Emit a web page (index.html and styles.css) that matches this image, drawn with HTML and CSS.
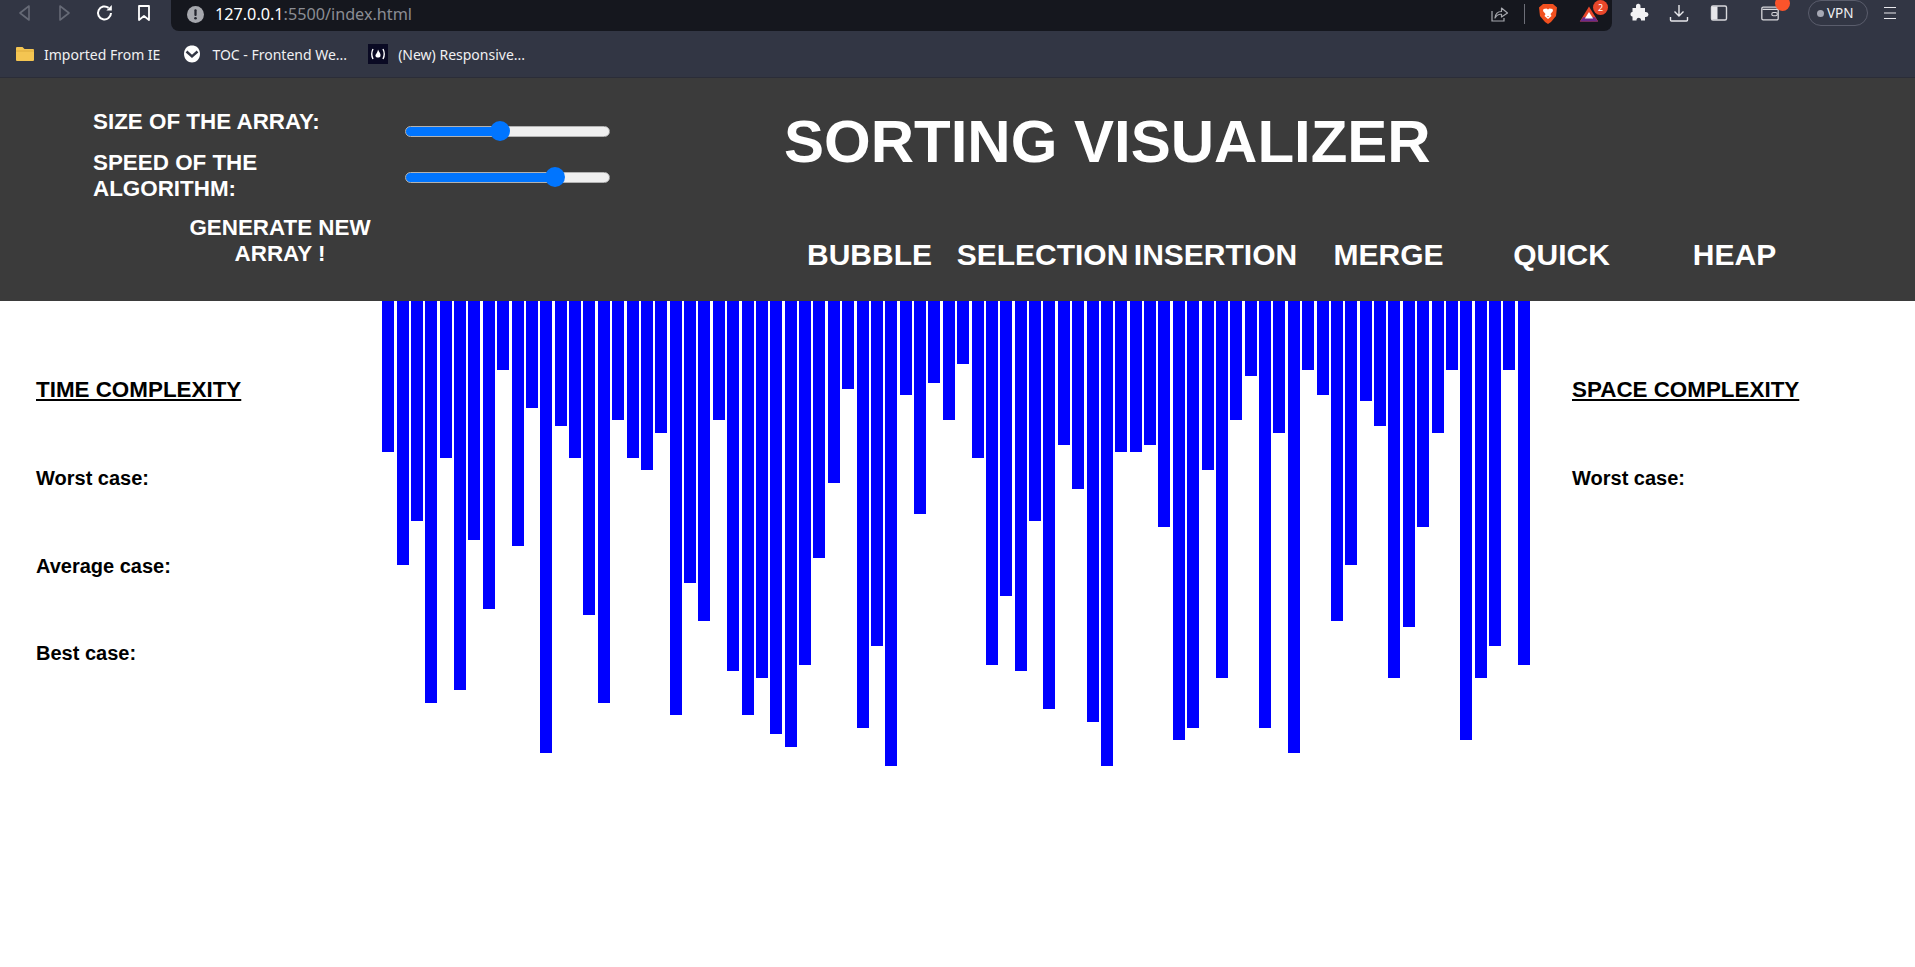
FILE: index.html
```html
<!DOCTYPE html>
<html lang="en">
<head>
    <meta charset="UTF-8">
    <meta name="viewport" content="width=device-width, initial-scale=1.0">
    <title>Sorting Visualizer</title>
    <link rel="stylesheet" href="styles.css">
</head>
<body>

    <div class="browser">
        <div class="toolbar">
            <div class="nav-icons">
                <svg class="icon" viewBox="0 0 20 20"><path d="M15 3 L6 10 L15 17 Z" fill="none" stroke="#666a76" stroke-width="1.6" stroke-linejoin="round"/></svg>
                <svg class="icon" viewBox="0 0 20 20"><path d="M6 3 L15 10 L6 17 Z" fill="none" stroke="#666a76" stroke-width="1.6" stroke-linejoin="round"/></svg>
                <svg class="icon" viewBox="0 0 20 20"><path d="M17 10 A6.5 6.5 0 1 1 14.6 4.9" fill="none" stroke="#fff" stroke-width="2"/><path d="M17.8 2 V7.4 H12.4 Z" fill="#fff"/></svg>
                <svg class="icon" viewBox="0 0 20 20"><path d="M5 3 H15 V17 L10 13 L5 17 Z" fill="none" stroke="#fff" stroke-width="1.8" stroke-linejoin="round"/></svg>
            </div>
            <div class="url-bar">
                <svg class="info-icon" viewBox="0 0 18 18"><circle cx="9" cy="9" r="9" fill="#a6a8ae"/><rect x="7.8" y="3.5" width="2.4" height="7" rx="1" fill="#23252e"/><circle cx="9" cy="13" r="1.4" fill="#23252e"/></svg>
                <span class="url"><span class="url-host">127.0.0.1</span>:5500/index.html</span>
                <div class="url-actions">
                    <svg class="icon share" viewBox="0 0 20 20"><path d="M3 7 V17 H15 V14" fill="none" stroke="#a6a8ae" stroke-width="1.2"/><path d="M6 14 C6.5 9.5 9.5 7.5 12.5 7.5 V4 L18.5 9 L12.5 13 V10.3 C10 10 7.5 11.5 6 14 Z" fill="none" stroke="#a6a8ae" stroke-width="1.2" stroke-linejoin="round"/></svg>
                    <span class="divider"></span>
                    <svg class="lion" viewBox="0 0 20 22"><path d="M5 1 H15 L19 4.5 L18 13 L13 19 L10 21 L7 19 L2 13 L1 4.5 Z" fill="#f1501f"/><path d="M5.5 6 L8.5 5.5 L10 6.5 L11.5 5.5 L14.5 6 L15 8 L12.5 11 L13.5 13 L10 16 L6.5 13 L7.5 11 L5 8 Z" fill="#fff"/><path d="M9 13 H11 L10 14.2 Z" fill="#f1501f"/></svg>
                    <div class="bat">
                        <svg class="icon" viewBox="0 0 24 20"><path d="M12 1 L23 19 H1 Z" fill="#e8472b"/><path d="M1 19 L5 14 H19 L23 19 Z" fill="#6b2a8c"/><path d="M12 7.5 L17 15.5 H7 Z" fill="#fff"/></svg>
                        <span class="badge">2</span>
                    </div>
                </div>
            </div>
            <div class="tool-icons">
                <svg class="icon" viewBox="0 0 20 20"><path d="M7 2.5 A2.3 2.3 0 0 1 11.5 3.5 V5 H16 V9 H17 A2.4 2.4 0 0 1 17 14 H16 V17.5 H12 V16.5 A2.3 2.3 0 0 0 7.5 16.5 V17.5 H3.5 V13.5 H3 A2.4 2.4 0 0 1 3 9 H3.5 V5 H7 Z" fill="#f2f2f4"/></svg>
                <svg class="icon" viewBox="0 0 20 20"><path d="M10 2 V13 M5.5 8.5 L10 13 L14.5 8.5" fill="none" stroke="#e8e8ec" stroke-width="1.4"/><path d="M1.5 14 V17 A1 1 0 0 0 2.5 18 H17.5 A1 1 0 0 0 18.5 17 V14" fill="none" stroke="#e8e8ec" stroke-width="1.4"/></svg>
                <svg class="icon" viewBox="0 0 20 20"><rect x="2.5" y="3" width="15" height="14" rx="1.5" fill="none" stroke="#d8d8dc" stroke-width="1.4"/><rect x="3" y="3.5" width="5.5" height="13" fill="#e6e6ea"/></svg>
                <div class="wallet">
                    <svg class="icon" viewBox="0 0 22 20"><path d="M19 6 V3.5 H3.5 A1.5 1.5 0 0 0 2 5 V16 A1.5 1.5 0 0 0 3.5 17.5 H19 A1.5 1.5 0 0 0 20 16 V6 H3" fill="none" stroke="#d8d8dc" stroke-width="1.4"/><rect x="13" y="9.5" width="6" height="3.5" rx="1.7" fill="none" stroke="#d8d8dc" stroke-width="1.2"/></svg>
                    <span class="wallet-dot"></span>
                </div>
                <div class="vpn"><span class="vpn-dot"></span>VPN</div>
                <svg class="menu" viewBox="0 0 12 14"><path d="M0 1.5 H12 M0 7 H12 M0 12.5 H12" stroke="#e8e8ec" stroke-width="1.2"/></svg>
            </div>
        </div>
        <div class="bookmarks">
            <div class="bookmark">
                <svg class="bm-icon" viewBox="0 0 20 16"><path d="M1 2 A1 1 0 0 1 2 1 H7.5 L9.5 3 H18 A1 1 0 0 1 19 4 V14 A1 1 0 0 1 18 15 H2 A1 1 0 0 1 1 14 Z" fill="#f4c552"/><path d="M1 5 H19" stroke="#d8a537" stroke-width="0.8"/></svg>
                Imported From IE
            </div>
            <div class="bookmark toc">
                <svg class="bm-icon small" viewBox="0 0 18 18"><path d="M9 0.5 C13 0.5 17 3 17 9 C17 14 13 17.5 9 17.5 C5 17.5 1 14 1 9 C1 3 5 0.5 9 0.5 Z" fill="#fff"/><path d="M3.5 6.5 L9 11.5 L14.5 6.5" fill="none" stroke="#323644" stroke-width="2.4"/></svg>
                TOC - Frontend We...
            </div>
            <div class="bookmark fcc">
                <svg class="bm-icon" viewBox="0 0 20 20"><rect width="20" height="20" fill="#0a0a23"/><path d="M5 5 Q2.5 10 5 15 M15 5 Q17.5 10 15 15" fill="none" stroke="#fff" stroke-width="1.4"/><path d="M10 5.5 C11 8 13 9.5 12.5 12 C12 14 8 14 7.5 12 C7.2 10.5 9.5 9 10 5.5 Z" fill="#fff"/></svg>
                (New) Responsive...
            </div>
        </div>
    </div>

    <header class="header">
        <div class="labels">
            <div class="label">SIZE OF THE ARRAY:</div>
            <div class="label">SPEED OF THE ALGORITHM:</div>
            <div class="generate">GENERATE NEW ARRAY !</div>
        </div>
        <div class="sliders">
            <input class="slider" type="range" min="0" max="100" value="46">
            <input class="slider" type="range" min="0" max="100" value="76">
        </div>
        <div class="title-block">
            <h1 class="title">SORTING VISUALIZER</h1>
            <nav class="algos">
                <div class="algo">BUBBLE</div>
                <div class="algo">SELECTION</div>
                <div class="algo">INSERTION</div>
                <div class="algo">MERGE</div>
                <div class="algo">QUICK</div>
                <div class="algo">HEAP</div>
            </nav>
        </div>
    </header>

    <main class="main">
        <section class="side side-left">
            <h2 class="side-title">TIME COMPLEXITY</h2>
            <p class="side-row">Worst case:</p>
            <p class="side-row">Average case:</p>
            <p class="side-row">Best case:</p>
        </section>
        <div class="bars" id="bars"></div>
        <section class="side side-right">
            <h2 class="side-title">SPACE COMPLEXITY</h2>
            <p class="side-row">Worst case:</p>
        </section>
    </main>

    <script src="script.js"></script>
</body>
</html>
```

FILE: styles.css
```css
* {
    box-sizing: border-box;
}
body {
    margin: 0;
    font-family: "Liberation Sans", Arial, sans-serif;
    background-color: #fff;
    color: #000;
    overflow: hidden;
}

/* browser chrome */
.browser {
    height: 78px;
    background-color: #323644;
    border-bottom: 1px solid #2b2d38;
    font-family: "Noto Sans", sans-serif;
    color: #f0f0f2;
}
.toolbar {
    display: flex;
    height: 31px;
}
.icon {
    width: 20px;
    height: 20px;
    display: block;
}
.nav-icons {
    display: flex;
    align-items: center;
    width: 171px;
    padding: 0 0 6px 14px;
    gap: 20px;
}
.url-bar {
    display: flex;
    align-items: center;
    width: 1441px;
    background-color: #15171e;
    border-radius: 0 0 8px 8px;
    padding: 0 0 3px 16px;
}
.info-icon {
    width: 17px;
    height: 17px;
}
.url {
    margin-left: 11px;
    font-size: 16.2px;
    color: #8b8d94;
    white-space: nowrap;
}
.url-host {
    color: #fff;
}
.url-actions {
    display: flex;
    align-items: center;
    margin-left: auto;
    padding-right: 11px;
}
.share {
    margin-right: 15px;
}
.divider {
    width: 1px;
    height: 20px;
    background-color: #6d6f78;
    margin-right: 13px;
}
.lion {
    width: 20px;
    height: 22px;
    margin-right: 21px;
}
.bat {
    position: relative;
    width: 22px;
    height: 20px;
}
.badge {
    position: absolute;
    top: -4px;
    right: -7px;
    width: 15px;
    height: 15px;
    border-radius: 50%;
    background-color: #e8472b;
    color: #fff;
    font-size: 9px;
    line-height: 15px;
    text-align: center;
}
.tool-icons {
    display: flex;
    align-items: center;
    flex: 1;
    padding: 0 0 5px 17px;
}
.tool-icons > .icon {
    margin-right: 20px;
}
.wallet {
    position: relative;
    width: 22px;
    height: 20px;
    margin: 0 26px 0 11px;
}
.wallet-dot {
    position: absolute;
    top: -7px;
    right: -8px;
    width: 15px;
    height: 15px;
    border-radius: 50%;
    background-color: #fb542b;
}
.vpn {
    display: flex;
    align-items: center;
    width: 60px;
    height: 26px;
    margin: 0 16px 0 0;
    padding-left: 8px;
    border: 1px solid #5a5d6c;
    border-radius: 13px;
    font-size: 13.5px;
}
.vpn-dot {
    width: 7px;
    height: 7px;
    margin-right: 3px;
    border-radius: 50%;
    background-color: #a6a8b4;
}
.menu {
    width: 12px;
    height: 14px;
}
.bookmarks {
    display: flex;
    align-items: center;
    height: 46px;
    padding: 0 0 0 15px;
    font-size: 14px;
}
.bookmark {
    display: flex;
    align-items: center;
    gap: 9px;
    white-space: nowrap;
}
.bm-icon {
    width: 20px;
    height: 20px;
}
.bm-icon.small {
    width: 18px;
    height: 18px;
}
.toc {
    gap: 11px;
    margin-left: 23px;
}
.fcc {
    gap: 10px;
    margin-left: 21px;
}

/* page header */
.header {
    display: flex;
    height: 223px;
    background-color: #3b3b3b;
    color: #fff;
    font-weight: bold;
}
.labels {
    display: flex;
    flex-direction: column;
    width: 312px;
    margin-left: 93px;
    padding-top: 31px;
    font-size: 22.4px;
    line-height: 26px;
}
.label {
    width: 280px;
    margin-bottom: 15px;
}
.generate {
    width: 200px;
    margin: -2px 0 0 87px;
    text-align: center;
}
.sliders {
    display: flex;
    flex-direction: column;
    gap: 26px;
    width: 205px;
    padding-top: 43px;
}
.slider {
    -webkit-appearance: none;
    appearance: none;
    display: block;
    width: 205px;
    height: 20px;
    margin: 0;
    background: transparent;
}
.slider::-webkit-slider-runnable-track {
    height: 11px;
    border: 1px solid #b2b2b2;
    border-radius: 6px;
    background: linear-gradient(to right, #0075ff var(--fill, 50%), #efefef var(--fill, 50%));
}
.slider::-webkit-slider-thumb {
    -webkit-appearance: none;
    width: 20px;
    height: 20px;
    margin-top: -5.5px;
    border-radius: 50%;
    background-color: #0075ff;
}
.title-block {
    margin-left: 174px;
}
.title {
    margin: 29px 0 0;
    font-size: 60px;
    line-height: 69px;
    white-space: nowrap;
}
.algos {
    display: grid;
    grid-template-columns: repeat(6, 173px);
    margin: 61px 0 0 -1px;
    font-size: 30px;
    line-height: 35px;
    text-align: center;
    white-space: nowrap;
}

/* main area */
.main {
    display: flex;
    align-items: flex-start;
}
.side {
    padding-top: 76px;
    font-weight: bold;
}
.side-left {
    width: 381px;
    padding-left: 36px;
}
.side-right {
    margin-left: 41px;
}
.side-title {
    margin: 0 0 42px;
    font-size: 22.4px;
    line-height: 26px;
    text-decoration: underline;
    white-space: nowrap;
}
.side-row {
    margin: 0;
    padding: 22px 0 42.6px;
    font-size: 20px;
    line-height: 23px;
}
.bars {
    display: flex;
    align-items: flex-start;
    width: 1150px;
}
.bar {
    flex: 1;
    margin: 0 1.2px;
    background-color: #00f;
}
```

FILE: script.js
```js
// bar heights of the current array, in px
const heights = [
    151, 264, 220, 402, 157, 389, 239, 308, 69, 245,
    107, 452, 125, 157, 314, 402, 119, 157, 169, 132,
    414, 282, 320, 119, 370, 414, 377, 433, 446, 364,
    257, 182, 88, 427, 345, 465, 94, 213, 82, 119,
    63, 157, 364, 295, 370, 220, 408, 144, 188, 421,
    465, 151, 151, 144, 226, 439, 427, 169, 377, 119,
    75, 427, 132, 452, 69, 94, 320, 264, 100, 125,
    377, 326, 226, 132, 69, 439, 377, 345, 69, 364
];

const bars = document.getElementById('bars');
heights.forEach(h => {
    const bar = document.createElement('div');
    bar.className = 'bar';
    bar.style.height = h + 'px';
    bars.appendChild(bar);
});

// paint the filled part of each slider up to its thumb
document.querySelectorAll('.slider').forEach(slider => {
    const px = 10 + (slider.value / 100) * 185;
    slider.style.setProperty('--fill', px + 'px');
});
```
